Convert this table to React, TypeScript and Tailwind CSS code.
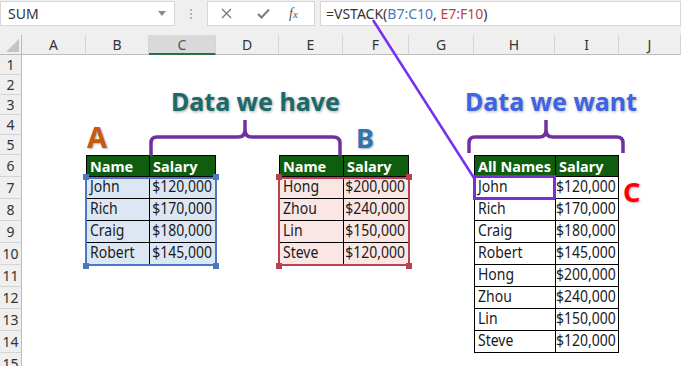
import React from "react";

const letters = ["A", "B", "C", "D", "E", "F", "G", "H", "I", "J"];
const rowNums = [1, 2, 3, 4, 5, 6, 7, 8, 9, 10, 11, 12, 13, 14, 15];

const teamA = [
  ["John", "$120,000"],
  ["Rich", "$170,000"],
  ["Craig", "$180,000"],
  ["Robert", "$145,000"],
];
const teamB = [
  ["Hong", "$200,000"],
  ["Zhou", "$240,000"],
  ["Lin", "$150,000"],
  ["Steve", "$120,000"],
];

type TableProps = {
  head: string;
  rows: string[][];
  widths: string;
  fill: string;
  outline?: "blue" | "red";
  markFirst?: boolean;
};

const Handle = ({ pos, color }: { pos: string; color: string }) => (
  <span className={`absolute w-[6px] h-[6px] ${pos} ${color}`} />
);

function DataTable({ head, rows, widths, fill, outline, markFirst }: TableProps) {
  const lineColor = outline === "blue" ? "border-[#4a78c2]" : "border-[#b8434f]";
  const handleColor = outline === "blue" ? "bg-[#4a78c2]" : "bg-[#b8434f]";
  return (
    <div className="flex flex-col">
      <div className={`grid ${widths} h-[22px] bg-[#0f5e0f] border border-black text-white font-bold text-[14.5px] leading-[20px]`}>
        <div className="pl-[3px] border-r border-black whitespace-nowrap">{head}</div>
        <div className="pl-[3px]">Salary</div>
      </div>
      <div className="relative">
        {rows.map(([name, pay], i) => (
          <div key={name} className={`grid ${widths} h-[22px] ${fill} border-x border-b border-black text-[14px] leading-[21px] text-[#1a1a1a]`}>
            <div className="relative pl-[3px] border-r border-black">
              <span className="inline-block origin-bottom scale-y-[1.15]">{name}</span>
              {markFirst && i === 0 && (
                <span className="absolute -left-[2px] -top-[2px] -right-[1px] -bottom-[2px] border-[3px] border-[#7a2ed8]" />
              )}
            </div>
            <div className="text-right pr-[3px]">
              <span className="inline-block origin-bottom scale-y-[1.15]">{pay}</span>
            </div>
          </div>
        ))}
        {outline && (
          <>
            <span className={`absolute -left-[1px] -right-[1px] top-0 -bottom-[1px] border-2 ${lineColor}`} />
            <Handle pos="-left-[3px] -top-[3px]" color={handleColor} />
            <Handle pos="-right-[3px] -top-[3px]" color={handleColor} />
            <Handle pos="-left-[3px] -bottom-[4px]" color={handleColor} />
            <Handle pos="-right-[3px] -bottom-[4px]" color={handleColor} />
          </>
        )}
      </div>
    </div>
  );
}

export default function App() {
  return (
    <div className="relative w-[681px] h-[366px] overflow-hidden bg-white font-['Noto_Sans',sans-serif]">
      {/* formula bar */}
      <div className="h-[35px] bg-[#efefef] pt-[1px]">
        <div className="flex h-[25px] items-stretch">
          <div className="w-[175px] bg-white border border-[#d6d6d6] flex items-center justify-between pl-[7px] pr-[8px] text-[14px] text-[#333]">
            <span>SUM</span>
            <svg width="8" height="5" viewBox="0 0 8 5">
              <path d="M0 0 H8 L4 5 Z" fill="#8a8a8a" />
            </svg>
          </div>
          <div className="w-[32px] flex flex-col items-center justify-center gap-[2px]">
            <span className="w-[2px] h-[2px] bg-[#b5b5b5]" />
            <span className="w-[2px] h-[2px] bg-[#b5b5b5]" />
            <span className="w-[2px] h-[2px] bg-[#b5b5b5]" />
          </div>
          <div className="w-[108px] bg-white border border-[#d6d6d6] flex items-center">
            <svg className="ml-[13px]" width="11" height="11" viewBox="0 0 11 11">
              <path d="M1 1 L10 10 M10 1 L1 10" stroke="#7a7a7a" strokeWidth="1.4" />
            </svg>
            <svg className="ml-[25px]" width="13" height="11" viewBox="0 0 13 11">
              <path d="M1 6 L4.5 9.5 L12 1.5" stroke="#7a7a7a" strokeWidth="2" fill="none" />
            </svg>
            <span className="ml-[19px] font-['Liberation_Serif',serif] italic text-[14px] text-[#555]">
              f<span className="text-[11px]">x</span>
            </span>
          </div>
          <div className="w-[5px]" />
          <div className="flex-1 bg-white border border-[#d6d6d6] flex items-center pl-[5px] text-[14px] text-[#333]">
            =VSTACK(<span className="text-[#4a78c2]">B7:C10</span>,&nbsp;<span className="text-[#b8434f]">E7:F10</span>)
          </div>
        </div>
      </div>

      {/* sheet */}
      <div className="grid grid-cols-[22px_64px_63px_67px_63px_64px_66px_65px_81px_64px_1fr] grid-rows-[20px_20px_20px_20px_20px_20px_22px_22px_22px_22px_22px_22px_22px_22px_22px_22px]">
        {/* corner */}
        <div className="col-start-1 row-start-1 bg-[#efefef] border-r border-b border-[#bcbcbc] flex items-end justify-end pr-[2px] pb-[2px]">
          <svg width="13" height="13" viewBox="0 0 13 13">
            <path d="M13 0 V13 H0 Z" fill="#c4c4c4" />
          </svg>
        </div>
        {letters.map((l) => (
          <div
            key={l}
            className={`row-start-1 flex items-center justify-center text-[14px] border-r border-[#d4d4d4] ${
              l === "C"
                ? "bg-[#d9d9d9] border-b-2 border-b-[#217346] text-[#555]"
                : "bg-[#efefef] border-b border-b-[#bcbcbc] text-[#333]"
            }`}
          >
            {l}
          </div>
        ))}
        <div className="row-start-1 bg-[#efefef] border-b border-[#bcbcbc]" />
        {rowNums.map((n) => (
          <div
            key={n}
            style={{ gridRowStart: n + 1 }}
            className="col-start-1 bg-[#efefef] border-r border-[#bcbcbc] border-b border-b-[#d4d4d4] flex items-center justify-center text-[14px] text-[#333]"
          >
            {n}
          </div>
        ))}

        {/* titles */}
        <div className="col-start-4 col-span-5 row-start-4 -mt-[6px] ml-[22px] text-[25px] leading-[24px] font-bold text-[#1a6a6a] [text-shadow:1px_1px_3px_rgba(0,0,0,0.35)] whitespace-nowrap">
          Data we have
        </div>
        <div className="col-start-9 col-span-3 row-start-4 -mt-[6px] -ml-[9px] text-[25px] leading-[24px] font-bold text-[#3d63e6] [text-shadow:1px_1px_3px_rgba(0,0,0,0.3)] whitespace-nowrap">
          Data we want
        </div>
        <div className="col-start-3 row-start-5 row-span-2 mt-[8px] ml-[1px] text-[29px] leading-[28px] font-bold text-[#c55a11] [text-shadow:1px_1px_2px_rgba(0,0,0,0.3)]">
          A
        </div>
        <div className="col-start-7 row-start-5 row-span-2 mt-[10px] ml-[13px] text-[27px] leading-[26px] font-bold text-[#2e75b6] [text-shadow:1px_1px_2px_rgba(0,0,0,0.3)]">
          B
        </div>
        <div className="col-start-11 row-start-8 row-span-2 mt-[2px] ml-[4px] text-[27px] leading-[26px] font-bold text-[#ff0000] [text-shadow:1px_1px_2px_rgba(0,0,0,0.3)]">
          C
        </div>

        {/* tables */}
        <div className="col-start-3 col-span-2 row-start-7 row-span-5">
          <DataTable head="Name" rows={teamA} widths="grid-cols-[63px_1fr]" fill="bg-[#dde7f4]" outline="blue" />
        </div>
        <div className="col-start-6 col-span-2 row-start-7 row-span-5">
          <DataTable head="Name" rows={teamB} widths="grid-cols-[64px_1fr]" fill="bg-[#fbe6e6]" outline="red" />
        </div>
        <div className="col-start-9 col-span-2 row-start-7 row-span-9">
          <DataTable head="All Names" rows={[...teamA, ...teamB]} widths="grid-cols-[81px_1fr]" fill="bg-white" markFirst />
        </div>
      </div>

      {/* braces and pointer line */}
      <svg className="absolute inset-0 pointer-events-none" width="681" height="366" viewBox="0 0 681 366">
        <g stroke="#7030a0" strokeWidth="3.5" fill="none" strokeLinecap="butt">
          <path d="M151 156 V143 Q151 137 157 137 H238 Q245 137 245 130 V120 M245 130 Q245 137 252 137 H333 Q340 137 340 143 V156" />
          <path d="M469 153 V143 Q469 137 475 137 H539 Q546 137 546 130 V120 M546 130 Q546 137 553 137 H617 Q623 137 623 143 V153" />
        </g>
        <path d="M373 20 L474 178" stroke="#7a2ef0" strokeWidth="2.5" />
      </svg>
    </div>
  );
}
